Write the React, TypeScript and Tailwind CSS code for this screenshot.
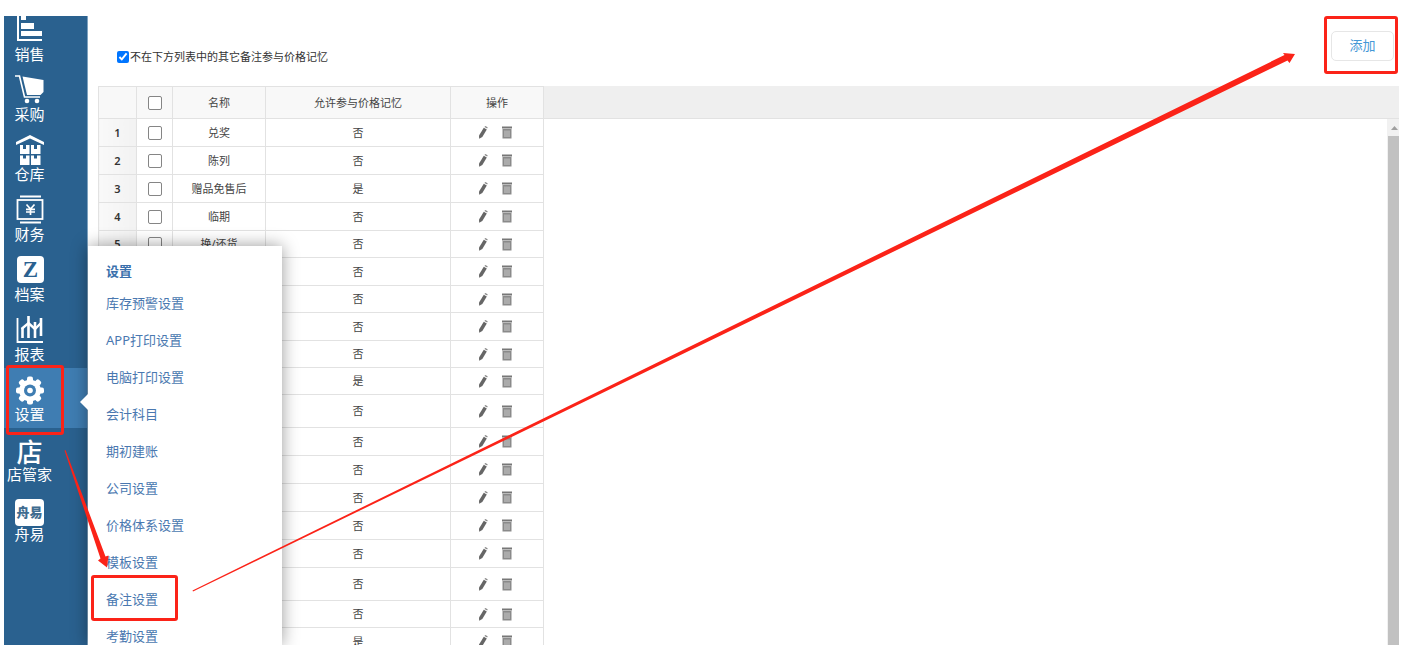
import type { ReactNode } from 'react'
import { clsx } from 'clsx'

interface NavItem {
  label: string
  icon: ReactNode
  active?: boolean
}

interface Remark {
  name: string
  allowed: boolean
  height: string
}

const navItems: NavItem[] = [
  {
    label: '销售',
    icon: (
      <svg viewBox="0 0 30 30" className="size-[30px]" fill="currentColor">
        <path d="M2 0h2v24h23v2H2zM6 0h5v5H6zM6 8h13v6H6zM6 16h21v5H6z" />
      </svg>
    ),
  },
  {
    label: '采购',
    icon: (
      <svg viewBox="0 0 30 30" className="size-[30px]" fill="currentColor">
        <path d="M7.500 1.500l21 3.500v12l-3 3H12z" />
        <path d="M0 1h4.500l5 21h15.500" fill="none" stroke="currentColor" strokeWidth="1.6" />
        <circle cx="12" cy="26" r="2.300" />
        <circle cx="22" cy="26" r="2.300" />
      </svg>
    ),
  },
  {
    label: '仓库',
    icon: (
      <svg viewBox="0 0 30 30" className="size-[30px]" fill="currentColor">
        <path d="M15 0l14 7v3L15 3.500 1 10V7z" />
        <path d="M5 10h3v4h3v-4h3.500v9H5zM16 10h3v4h3v-4h3.500v9H16zM5 20.500h3v3h3v-3h3.500v9.500H5zM16 20.500h3v3h3v-3h3.500v9.500H16z" />
      </svg>
    ),
  },
  {
    label: '财务',
    icon: (
      <svg viewBox="0 0 30 30" className="size-[30px]" fill="none" stroke="currentColor">
        <path d="M5 1.500h21M5 27.500h21" strokeWidth="2" />
        <rect x="2.500" y="5" width="25" height="19" strokeWidth="1.800" />
        <path d="M11.500 9.500l4 4.500 4-4.500M15.500 14v6M11 14.300h9M11 17h9" strokeWidth="1.700" />
      </svg>
    ),
  },
  {
    label: '档案',
    icon: (
      <svg viewBox="0 0 30 30" className="size-[30px]" fill="currentColor">
        <rect x="2" y="1" width="27" height="27" rx="4" />
        <text x="15.500" y="22" textAnchor="middle" className="fill-[#2a618f] font-['Liberation_Serif',serif] text-[23px] font-bold">Z</text>
      </svg>
    ),
  },
  {
    label: '报表',
    icon: (
      <svg viewBox="0 0 30 30" className="size-[30px]" fill="none" stroke="currentColor">
        <path d="M2.500 3v24H28" strokeWidth="1.800" />
        <path d="M7.500 13v10M13.500 1v22M20 7v16M26 3v18" strokeWidth="2.600" />
        <path d="M6.500 14l7-6 6.500 6 6-6" strokeWidth="2.400" />
      </svg>
    ),
  },
  {
    label: '设置',
    active: true,
    icon: (
      <svg viewBox="0 0 30 30" className="size-[30px]">
        <g fill="currentColor">
          <circle cx="15" cy="15.500" r="10.800" />
          <rect x="12" y="1.500" width="6" height="28" rx="2" />
          <rect x="12" y="1.500" width="6" height="28" rx="2" transform="rotate(45 15 15.500)" />
          <rect x="12" y="1.500" width="6" height="28" rx="2" transform="rotate(90 15 15.500)" />
          <rect x="12" y="1.500" width="6" height="28" rx="2" transform="rotate(135 15 15.500)" />
        </g>
        <circle cx="15" cy="15.500" r="6" fill="#3f7db2" />
        <circle cx="15" cy="15.500" r="2.800" fill="currentColor" />
      </svg>
    ),
  },
  {
    label: '店管家',
    icon: <span className="pt-1 text-[26px] leading-[26px] font-medium">店</span>,
  },
  {
    label: '舟易',
    icon: (
      <span className="mt-1 flex h-[27px] w-[29px] items-center justify-center rounded bg-white text-[13px] font-black text-[#3f6c90]">
        舟易
      </span>
    ),
  },
]

const remarks: Remark[] = [
  { name: '兑奖', allowed: false, height: 'h-[28px]' },
  { name: '陈列', allowed: false, height: 'h-[28px]' },
  { name: '赠品免售后', allowed: true, height: 'h-[28px]' },
  { name: '临期', allowed: false, height: 'h-[28px]' },
  { name: '换/还货', allowed: false, height: 'h-[27px]' },
  { name: '', allowed: false, height: 'h-[28px]' },
  { name: '', allowed: false, height: 'h-[27px]' },
  { name: '', allowed: false, height: 'h-[28px]' },
  { name: '', allowed: false, height: 'h-[27px]' },
  { name: '', allowed: true, height: 'h-[27px]' },
  { name: '', allowed: false, height: 'h-[33px]' },
  { name: '', allowed: false, height: 'h-[28px]' },
  { name: '', allowed: false, height: 'h-[28px]' },
  { name: '', allowed: false, height: 'h-[28px]' },
  { name: '', allowed: false, height: 'h-[28px]' },
  { name: '', allowed: false, height: 'h-[28px]' },
  { name: '', allowed: false, height: 'h-[33px]' },
  { name: '', allowed: false, height: 'h-[27px]' },
  { name: '', allowed: true, height: 'h-[28px]' },
]

const menuItems = [
  '库存预警设置',
  'APP打印设置',
  '电脑打印设置',
  '会计科目',
  '期初建账',
  '公司设置',
  '价格体系设置',
  '模板设置',
  '备注设置',
  '考勤设置',
]

function Highlight({ className }: { className: string }) {
  return <span className={clsx('pointer-events-none absolute z-20 rounded-[3px] border-[3px] border-[#fb2318]', className)} />
}

function PencilIcon() {
  return (
    <svg viewBox="0 0 10 13" className="h-[13px] w-[10px]">
      <path d="M5.800 1.800L8.800 3.400 4.300 11 1.200 12.800 1 9.600z" fill="#666" />
      <path d="M6.400 1L7.300 0 9.700 1.300 9.200 2.600z" fill="#888" />
    </svg>
  )
}

function TrashIcon() {
  return (
    <svg viewBox="0 0 10 13" className="h-[13px] w-[10px]">
      <path d="M0 .5h10v2H0z" fill="#777" />
      <path d="M.500 3h9v9.500h-9z" fill="#8a8a8a" />
      <path d="M3 4.500v6.500M5 4.500v6.500M7 4.500v6.500" stroke="#ddd" strokeWidth=".8" />
    </svg>
  )
}

function Sidebar() {
  return (
    <nav className="w-[84px] shrink-0 overflow-hidden border-r border-[#7fa3c0] bg-[#2a618f] text-white">
      <ul className="-mt-2">
        {navItems.map((item) => (
          <li key={item.label} className={clsx('relative h-[60px]', item.active && 'bg-[#3f7db2]')}>
            <a href="#" className="flex w-[51px] flex-col items-center pt-[7px]">
              <span className="flex h-[29px] items-start justify-center">{item.icon}</span>
              <span className="text-[15px] leading-5 whitespace-nowrap">{item.label}</span>
            </a>
            {item.active && <Highlight className="-top-[3px] left-[2px] h-[70px] w-[58px]" />}
          </li>
        ))}
      </ul>
    </nav>
  )
}

function SettingsMenu() {
  return (
    <div className="absolute top-[230px] bottom-0 left-[84px] w-[194px] bg-white pt-3 pl-[18px] text-[13px] shadow-[0_0_16px_rgba(0,0,0,0.4)]">
      <svg viewBox="0 0 8 16" className="absolute top-[148px] -left-2 h-4 w-2" fill="#fff">
        <path d="M8 0v16L0 8z" />
      </svg>
      <h2 className="h-[27px] leading-[26px] font-bold text-[#3a70ac]">设置</h2>
      <ul>
        {menuItems.map((label) => (
          <li key={label} className="relative h-[37px] leading-[37px]">
            <a href="#" className="text-[#4a78b0]">{label}</a>
            {label === '备注设置' && <Highlight className="-top-[6px] -left-[15px] h-[46px] w-[87px]" />}
          </li>
        ))}
      </ul>
    </div>
  )
}

function RemarkTable() {
  return (
    <table className="w-[445px] table-fixed border-collapse text-center text-[11px] leading-4 text-[#444]">
      <colgroup>
        <col className="w-[38px]" />
        <col className="w-[36px]" />
        <col className="w-[93px]" />
        <col className="w-[185px]" />
        <col className="w-[93px]" />
      </colgroup>
      <thead>
        <tr className="h-8 bg-[#f8f8f8] *:border *:border-[#e2e2e2] *:p-0 *:font-normal">
          <th />
          <th>
            <input type="checkbox" aria-label="全选" className="mx-auto block size-[14px] appearance-none rounded-[2px] border border-[#858585] bg-white" />
          </th>
          <th>名称</th>
          <th>允许参与价格记忆</th>
          <th>操作</th>
        </tr>
      </thead>
      <tbody>
        {remarks.map((remark, index) => (
          <tr key={index} className={clsx(remark.height, '*:border *:border-[#e2e2e2] *:p-0')}>
            <td className="bg-linear-to-r from-[#f9f9f9] to-[#f2f2f2] font-semibold text-[#333]">
              {remark.name && index + 1}
            </td>
            <td>
              <input
                type="checkbox"
                aria-label={`选择第${index + 1}行`}
                className="mx-auto block size-[14px] appearance-none rounded-[2px] border border-[#858585] bg-white"
              />
            </td>
            <td>{remark.name}</td>
            <td>{remark.allowed ? '是' : '否'}</td>
            <td>
              <div className="flex items-center justify-center gap-[14px] pr-1">
                <button type="button" aria-label="编辑"><PencilIcon /></button>
                <button type="button" aria-label="删除"><TrashIcon /></button>
              </div>
            </td>
          </tr>
        ))}
      </tbody>
    </table>
  )
}

function Scrollbar() {
  return (
    <div className="flex w-3 shrink-0 flex-col bg-[#f1f1f1]">
      <svg viewBox="0 0 12 17" className="h-[17px] w-3 shrink-0" fill="#a0a0a0">
        <path d="M4 11l3.500-4 3.500 4z" />
      </svg>
      <div className="ml-px flex-1 bg-[#c1c1c1]" />
    </div>
  )
}

function Arrows() {
  return (
    <svg className="pointer-events-none absolute top-0 left-0 z-30 h-[629px] w-[1395px]" viewBox="4 16 1395 629" fill="#fb2318">
      <path d="M64.500 450.500L65.500 450 105.500 556.500 108.500 555.500 107 567.500 98 560.500 100.500 558.500z" />
      <path d="M192.500 590.500L1284.500 55 1283 53 1295 54 1289.500 63 1287.500 60.500 193 591.500z" />
    </svg>
  )
}

export default function App() {
  return (
    <div className="h-screen bg-white pt-4 pr-[19px] pb-3 pl-1 font-['Noto_Sans','Noto_Sans_CJK_SC',sans-serif]">
      <div className="relative flex h-full overflow-hidden">
        <Sidebar />
        <main className="flex min-w-0 flex-1 flex-col pl-[10px]">
          <header className="flex h-[70px] shrink-0 items-start justify-between pr-[5px] pl-[19px]">
            <label className="mt-[33px] flex items-center text-[11px] leading-4 text-[#333]">
              <input type="checkbox" defaultChecked className="mr-px size-3 accent-[#0075ff]" />
              不在下方列表中的其它备注参与价格记忆
            </label>
            <div className="relative mt-[15px]">
              <button type="button" className="h-[30px] w-[63px] rounded-[5px] border border-[#e6e6e6] bg-white text-[13px] text-[#4497d6]">
                添加
              </button>
              <Highlight className="-top-[15px] -left-[7px] h-[58px] w-[74px]" />
            </div>
          </header>
          <div className="flex min-h-0 flex-1 overflow-hidden">
            <RemarkTable />
            <div className="flex flex-1 flex-col">
              <div className="h-[33px] shrink-0 border-b border-[#e2e2e2] bg-[#efefef]" />
              <div className="flex min-h-0 flex-1 justify-end">
                <Scrollbar />
              </div>
            </div>
          </div>
        </main>
        <SettingsMenu />
        <Arrows />
      </div>
    </div>
  )
}
